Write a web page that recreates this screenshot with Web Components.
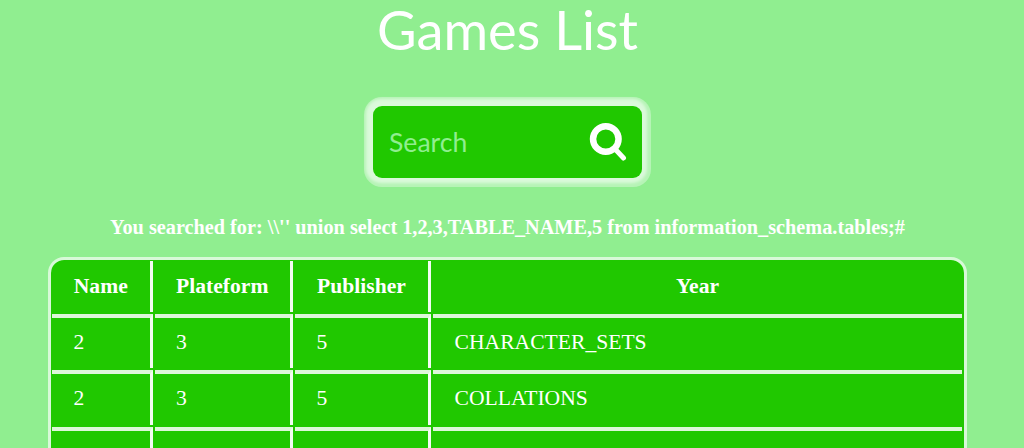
<!DOCTYPE html>
<html lang="en">
<head>
<meta charset="utf-8">
<title>Games List</title>
<style>
    html, body {
        margin:0;
        height:448px;
        overflow:hidden;
        background-color:#90ee90;
    }
</style>
</head>
<body>
<games-page>
    <span slot="title">Games List</span>
    <search-box slot="search">Search</search-box>
    <span slot="message">You searched for: \\'' union select 1,2,3,TABLE_NAME,5 from information_schema.tables;#</span>
    <games-table slot="table">
        <game-row>
            <game-cell head style="width:100.5px">Name</game-cell>
            <game-cell head style="width:138px">Plateform</game-cell>
            <game-cell head style="width:136px">Publisher</game-cell>
            <game-cell head last>Year</game-cell>
        </game-row>
        <game-row>
            <game-cell>2</game-cell><game-cell>3</game-cell><game-cell>5</game-cell><game-cell last>CHARACTER_SETS</game-cell>
        </game-row>
        <game-row>
            <game-cell>2</game-cell><game-cell>3</game-cell><game-cell>5</game-cell><game-cell last>COLLATIONS</game-cell>
        </game-row>
        <game-row>
            <game-cell>2</game-cell><game-cell>3</game-cell><game-cell>5</game-cell><game-cell last>COLLATION_CHARACTER_SET_APPLICABILITY</game-cell>
        </game-row>
    </games-table>
</games-page>

<script>
// ページ全体
class GamesPage extends HTMLElement {
    constructor() {
        super();
        this.attachShadow({mode: 'open'});
    }

    connectedCallback() {
        this.shadowRoot.innerHTML = `
            <style>
                :host {
                    display:block;
                    width:1015px;
                    color:white;
                }
                h1 {
                    margin:0;
                    height:60px;
                    font:400 54.3px/58px Lato, "Noto Sans", sans-serif;
                    text-align:center;
                }
                .search {
                    display:flex;
                    justify-content:center;
                    margin-top:46px;
                }
                p {
                    margin:38px 0 0 0;
                    font:700 20.25px/23px "Liberation Serif", serif;
                    text-align:center;
                }
                .table {
                    margin:18px 48px 0 48px;
                }
            </style>
            <h1><slot name="title"></slot></h1>
            <div class="search"><slot name="search"></slot></div>
            <p><slot name="message"></slot></p>
            <div class="table"><slot name="table"></slot></div>
        `;
    }
}
customElements.define('games-page', GamesPage);

class SearchBox extends HTMLElement {
    constructor() {
        super();
        this.attachShadow({mode: 'open'});
    }

    connectedCallback() {
        this.shadowRoot.innerHTML = `
            <style>
                :host {
                    display:flex;
                    align-items:center;
                    justify-content:space-between;
                    box-sizing:border-box;
                    width:269px;
                    height:72px;
                    padding:0 15px 0 16px;
                    background-color:#20c800;
                    border-radius:9px;
                    box-shadow:-1px -1px 3px 6px rgba(255,255,255,.5), 0 0 0 9px rgba(255,255,255,.35);
                    font:400 26.6px Lato, "Noto Sans", sans-serif;
                }
                span {
                    color:#90ee90;
                }
                svg {
                    display:block;
                }
            </style>
            <span><slot></slot></span>
            <svg width="38" height="40" viewBox="0 0 38 40" fill="none" stroke="white" stroke-linecap="round">
                <circle cx="16.8" cy="17" r="12.75" stroke-width="6.5"/>
                <path d="M27 28 L34.5 36" stroke-width="5"/>
            </svg>
        `;
    }
}
customElements.define('search-box', SearchBox);

class GamesTable extends HTMLElement {
    constructor() {
        super();
        this.attachShadow({mode: 'open'});
    }

    connectedCallback() {
        this.shadowRoot.innerHTML = `
            <style>
                :host {
                    display:block;
                    overflow:hidden;
                    background-color:#20c800;
                    border:3px solid rgba(255,255,255,.65);
                    border-radius:16px;
                    background-clip:padding-box;
                }
                .rows {
                    display:table;
                    width:calc(100% + 1px);
                    margin:-1px 0 0 -1px;
                    border-collapse:separate;
                    border-spacing:2px;
                    font:21.6px/25px "Liberation Serif", serif;
                }
            </style>
            <div class="rows"><slot></slot></div>
        `;
    }
}
customElements.define('games-table', GamesTable);

class GameRow extends HTMLElement {
    constructor() {
        super();
        this.attachShadow({mode: 'open'});
    }

    connectedCallback() {
        this.shadowRoot.innerHTML = `
            <style>
                :host {
                    display:table-row;
                }
            </style>
            <slot></slot>
        `;
    }
}
customElements.define('game-row', GameRow);

class GameCell extends HTMLElement {
    constructor() {
        super();
        this.attachShadow({mode: 'open'});
    }

    connectedCallback() {
        this.shadowRoot.innerHTML = `
            <style>
                :host {
                    display:table-cell;
                    box-sizing:border-box;
                    height:54.5px;
                    padding:0 1em 1px 1em;
                    border-top:4px solid rgba(255,255,255,.85);
                    border-right:3px solid rgba(255,255,255,.95);
                    vertical-align:middle;
                    white-space:nowrap;
                }
                :host([head]) {
                    height:50.5px;
                    padding-bottom:0;
                    border-top:none;
                    font-weight:700;
                    text-align:center;
                }
                :host([last]) {
                    border-right:none;
                }
            </style>
            <slot></slot>
        `;
    }
}
customElements.define('game-cell', GameCell);
</script>
</body>
</html>
